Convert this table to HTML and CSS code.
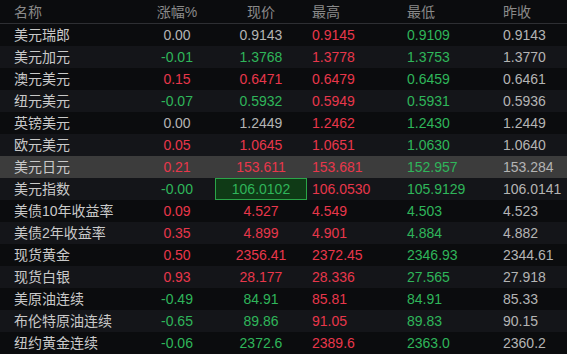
FILE: index.html
```html
<!DOCTYPE html>
<html lang="zh-CN">
<head>
  <meta charset="UTF-8">
  <title>外汇行情</title>
  <link rel="stylesheet" href="styles.css">
</head>
<body>
  <div class="quotes">
    <div class="row head">
      <div class="c name">名称</div>
      <div class="c chg">涨幅%</div>
      <div class="c price">现价</div>
      <div class="c high">最高</div>
      <div class="c low">最低</div>
      <div class="c prev">昨收</div>
    </div>

    <div class="row">
      <div class="c name">美元瑞郎</div>
      <div class="c chg">0.00</div>
      <div class="c price">0.9143</div>
      <div class="c high up">0.9145</div>
      <div class="c low down">0.9109</div>
      <div class="c prev">0.9143</div>
    </div>
    <div class="row">
      <div class="c name">美元加元</div>
      <div class="c chg down">-0.01</div>
      <div class="c price down">1.3768</div>
      <div class="c high up">1.3778</div>
      <div class="c low down">1.3753</div>
      <div class="c prev">1.3770</div>
    </div>
    <div class="row">
      <div class="c name">澳元美元</div>
      <div class="c chg up">0.15</div>
      <div class="c price up">0.6471</div>
      <div class="c high up">0.6479</div>
      <div class="c low down">0.6459</div>
      <div class="c prev">0.6461</div>
    </div>
    <div class="row">
      <div class="c name">纽元美元</div>
      <div class="c chg down">-0.07</div>
      <div class="c price down">0.5932</div>
      <div class="c high up">0.5949</div>
      <div class="c low down">0.5931</div>
      <div class="c prev">0.5936</div>
    </div>
    <div class="row">
      <div class="c name">英镑美元</div>
      <div class="c chg">0.00</div>
      <div class="c price">1.2449</div>
      <div class="c high up">1.2462</div>
      <div class="c low down">1.2430</div>
      <div class="c prev">1.2449</div>
    </div>
    <div class="row">
      <div class="c name">欧元美元</div>
      <div class="c chg up">0.05</div>
      <div class="c price up">1.0645</div>
      <div class="c high up">1.0651</div>
      <div class="c low down">1.0630</div>
      <div class="c prev">1.0640</div>
    </div>
    <div class="row selected">
      <div class="c name">美元日元</div>
      <div class="c chg up">0.21</div>
      <div class="c price up">153.611</div>
      <div class="c high up">153.681</div>
      <div class="c low down">152.957</div>
      <div class="c prev">153.284</div>
    </div>
    <div class="row">
      <div class="c name">美元指数</div>
      <div class="c chg down">-0.00</div>
      <div class="c price down"><span class="flash">106.0102</span></div>
      <div class="c high up">106.0530</div>
      <div class="c low down">105.9129</div>
      <div class="c prev">106.0141</div>
    </div>
    <div class="row">
      <div class="c name">美债10年收益率</div>
      <div class="c chg up">0.09</div>
      <div class="c price up">4.527</div>
      <div class="c high up">4.549</div>
      <div class="c low down">4.503</div>
      <div class="c prev">4.523</div>
    </div>
    <div class="row">
      <div class="c name">美债2年收益率</div>
      <div class="c chg up">0.35</div>
      <div class="c price up">4.899</div>
      <div class="c high up">4.901</div>
      <div class="c low down">4.884</div>
      <div class="c prev">4.882</div>
    </div>
    <div class="row">
      <div class="c name">现货黄金</div>
      <div class="c chg up">0.50</div>
      <div class="c price up">2356.41</div>
      <div class="c high up">2372.45</div>
      <div class="c low down">2346.93</div>
      <div class="c prev">2344.61</div>
    </div>
    <div class="row">
      <div class="c name">现货白银</div>
      <div class="c chg up">0.93</div>
      <div class="c price up">28.177</div>
      <div class="c high up">28.336</div>
      <div class="c low down">27.565</div>
      <div class="c prev">27.918</div>
    </div>
    <div class="row">
      <div class="c name">美原油连续</div>
      <div class="c chg down">-0.49</div>
      <div class="c price down">84.91</div>
      <div class="c high up">85.81</div>
      <div class="c low down">84.91</div>
      <div class="c prev">85.33</div>
    </div>
    <div class="row">
      <div class="c name">布伦特原油连续</div>
      <div class="c chg down">-0.65</div>
      <div class="c price down">89.86</div>
      <div class="c high up">91.05</div>
      <div class="c low down">89.83</div>
      <div class="c prev">90.15</div>
    </div>
    <div class="row">
      <div class="c name">纽约黄金连续</div>
      <div class="c chg down">-0.06</div>
      <div class="c price down">2372.6</div>
      <div class="c high up">2389.6</div>
      <div class="c low down">2363.0</div>
      <div class="c prev">2360.2</div>
    </div>
  </div>
</body>
</html>
```

FILE: styles.css
```css
body {
  margin: 0;
  background-color: #0b0c0e;
  font-family: 'Liberation Sans', 'Noto Sans CJK SC', sans-serif;
  font-size: 14px;
  color: #b4b4b4;
  width: 567px;
  height: 354px;
  overflow: hidden;
}

.quotes {
  display: flex;
  flex-direction: column;
}

.row {
  display: grid;
  grid-template-columns: 140px 74px 94px 95px 96px 1fr;
  height: 22px;
  align-items: center;
  background-color: #0b0c0e;
}

.row:nth-child(odd) {
  background-color: #141519;
}

.row.head {
  height: 23px;
  border-bottom: 1px solid #2e2f33;
  background-color: #0b0c0e;
  color: #8a8a8a;
}

.row.selected {
  background-color: #3c3c3c;
}

.c {
  white-space: nowrap;
  line-height: 22px;
}

.name {
  padding-left: 14px;
  color: #c9c9c9;
}

.head .name {
  color: #8a8a8a;
}

.chg,
.price {
  text-align: center;
}

.high,
.low,
.prev {
  padding-left: 4px;
}

.up {
  color: #e8374b;
}

.down {
  color: #2fb55a;
}

/* 刚刚跳动的价格 */
.flash {
  display: block;
  height: 20px;
  line-height: 20px;
  margin: 0 1px;
  background-color: #0f3a16;
  border: 1px solid #2aa548;
  box-sizing: content-box;
}
```
